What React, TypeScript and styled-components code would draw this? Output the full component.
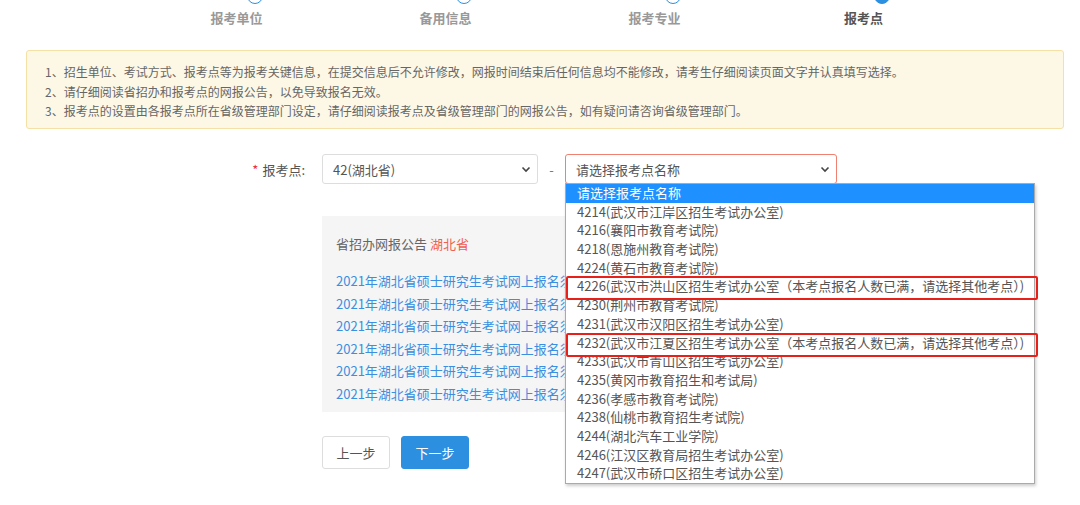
import React from "react";
import styled, { createGlobalStyle } from "styled-components";

const G = createGlobalStyle`
  body{margin:0;background:#fff;font-family:"Microsoft YaHei","Noto Sans CJK SC",sans-serif;}
`;
const Page = styled.div`width:1080px;height:505px;overflow:hidden;position:relative;`;
const Steps = styled.div`display:flex;padding-left:195px;height:50px;`;
const Step = styled.div`width:209px;position:relative;text-align:center;`;
const Dot = styled.div<{ $on?: boolean }>`
  position:absolute;left:50%;top:-12px;margin-left:-53px;width:14px;height:14px;border-radius:50%;
  border:1px solid #2d8fe0;background:${p => (p.$on ? "#2d8fe0" : "#fff")};
`;
const StepLabel = styled.div<{ $on?: boolean }>`
  position:relative;left:-63px;top:8px;font-size:13px;font-weight:bold;color:${p => (p.$on ? "#555" : "#999")};
`;
const Notice = styled.div`
  margin:0 16px 0 26px;height:79px;box-sizing:border-box;background:#fdf8e6;border:1px solid #f5e1a6;border-radius:3px;
  padding:11px 18px;font-size:12px;color:#666;line-height:19.5px;
`;
const FormRow = styled.div`display:flex;align-items:center;margin-top:25px;height:30px;`;
const Label = styled.div`width:322px;text-align:right;font-size:13px;color:#555;padding-right:17px;box-sizing:border-box;
  span{color:#e33;margin-right:4px;}`;
const Select = styled.div<{ $w: number; $err?: boolean }>`
  position:relative;width:${p => p.$w}px;height:30px;box-sizing:border-box;border:1px solid ${p => (p.$err ? "#f08070" : "#ddd")};
  border-radius:3px;display:flex;align-items:center;justify-content:space-between;padding:0 6px 0 10px;font-size:13px;color:#555;
`;
const Dash = styled.div`width:27px;text-align:center;color:#777;font-size:13px;`;
const List = styled.div`
  position:absolute;left:-1px;top:28px;width:468px;height:299px;background:#fff;border:1px solid #aaa;z-index:5;
  box-shadow:1px 2px 3px rgba(0,0,0,.2);font-size:13px;color:#555;
`;
const Opt = styled.div<{ $sel?: boolean }>`height:18.7px;line-height:18.7px;padding-left:11px;white-space:nowrap;
  background:${p => (p.$sel ? "#1e90ff" : "transparent")};color:${p => (p.$sel ? "#fff" : "#555")};`;
const Mark = styled.div<{ $t: number }>`position:absolute;z-index:6;left:0;top:${p => p.$t}px;width:472px;height:24px;border:2px solid #e8201a;border-radius:2px;box-sizing:border-box;`;
const Panel = styled.div`margin:32px 0 0 322px;width:430px;height:196px;background:#f5f5f5;padding:18px 14px;box-sizing:border-box;`;
const PTitle = styled.div`font-size:13px;color:#666;margin-bottom:17px;span{color:#f06050;}`;
const Link = styled.div`font-size:13px;color:#3a8fe0;line-height:22.5px;white-space:nowrap;`;
const Btns = styled.div`display:flex;gap:11px;margin:24px 0 0 322px;`;
const Btn = styled.div<{ $p?: boolean }>`width:68px;height:33px;border-radius:3px;display:flex;align-items:center;justify-content:center;font-size:13px;box-sizing:border-box;
  background:${p => (p.$p ? "#2d8fe0" : "#fff")};color:${p => (p.$p ? "#fff" : "#555")};border:1px solid ${p => (p.$p ? "#2d8fe0" : "#ddd")};`;

const Chev = () => (
  <svg width="10" height="10" viewBox="0 0 10 10"><path d="M1.5 3.5 5 7 8.5 3.5" stroke="#444" strokeWidth="1.6" fill="none" /></svg>
);

const opts = [
  "4214(武汉市江岸区招生考试办公室)", "4216(襄阳市教育考试院)", "4218(恩施州教育考试院)", "4224(黄石市教育考试院)",
  "4226(武汉市洪山区招生考试办公室（本考点报名人数已满，请选择其他考点）)", "4230(荆州市教育考试院)",
  "4231(武汉市汉阳区招生考试办公室)", "4232(武汉市江夏区招生考试办公室（本考点报名人数已满，请选择其他考点）)",
  "4233(武汉市青山区招生考试办公室)", "4235(黄冈市教育招生和考试局)", "4236(孝感市教育考试院)", "4238(仙桃市教育招生考试院)",
  "4244(湖北汽车工业学院)", "4246(江汉区教育局招生考试办公室)", "4247(武汉市硚口区招生考试办公室)",
];

export default function App() {
  return (
    <Page>
      <G />
      <Steps>
        {["报考单位", "备用信息", "报考专业", "报考点"].map((s, i) => (
          <Step key={s}><Dot $on={i === 3} /><StepLabel $on={i === 3}>{s}</StepLabel></Step>
        ))}
      </Steps>
      <Notice>
        <div>1、招生单位、考试方式、报考点等为报考关键信息，在提交信息后不允许修改，网报时间结束后任何信息均不能修改，请考生仔细阅读页面文字并认真填写选择。</div>
        <div>2、请仔细阅读省招办和报考点的网报公告，以免导致报名无效。</div>
        <div>3、报考点的设置由各报考点所在省级管理部门设定，请仔细阅读报考点及省级管理部门的网报公告，如有疑问请咨询省级管理部门。</div>
      </Notice>
      <FormRow>
        <Label><span>*</span>报考点:</Label>
        <Select $w={216}>42(湖北省)<Chev /></Select>
        <Dash>-</Dash>
        <Select $w={272} $err>
          请选择报考点名称<Chev />
          <List>
            <Opt $sel>请选择报考点名称</Opt>
            {opts.map(o => <Opt key={o}>{o}</Opt>)}
          </List>
          <Mark $t={121} />
          <Mark $t={178} />
        </Select>
      </FormRow>
      <Panel>
        <PTitle>省招办网报公告 <span>湖北省</span></PTitle>
        {Array.from({ length: 6 }).map((_, i) => <Link key={i}>2021年湖北省硕士研究生考试网上报名须知</Link>)}
      </Panel>
      <Btns><Btn>上一步</Btn><Btn $p>下一步</Btn></Btns>
    </Page>
  );
}
